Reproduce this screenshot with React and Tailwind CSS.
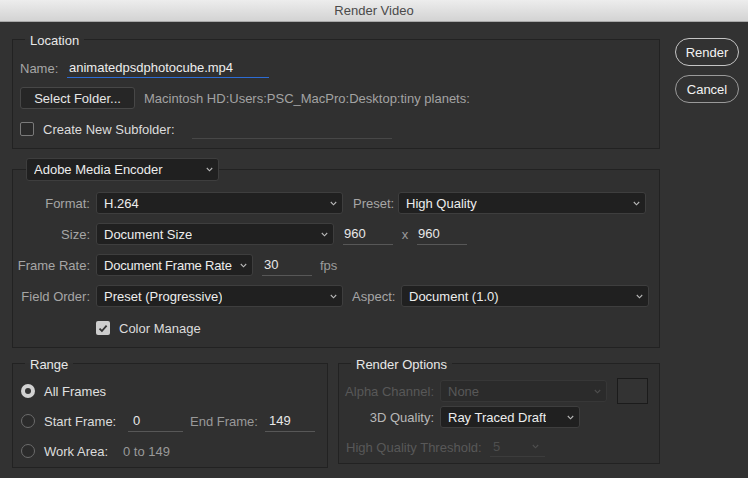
import React from "react";

const Chevron = ({ dim }) => (
  <svg width="7" height="5" viewBox="0 0 7 5" className="shrink-0">
    <path d="M0.8 1 L3.5 3.8 L6.2 1" fill="none" stroke={dim ? "#4e4e4e" : "#b8b8b8"} strokeWidth="1.1" />
  </svg>
);

function Dropdown({ value, className = "", disabled }) {
  return (
    <div
      className={`flex h-[22px] items-center justify-between gap-[4px] rounded-[3px] border pl-[7px] pr-[5px] ${
        disabled ? "border-[#373737] bg-[#2b2b2b] text-[#585858]" : "border-[#3e3e3e] bg-[#202020] text-[#ededed]"
      } ${className}`}
    >
      <span className="truncate pt-[1px]">{value}</span>
      <Chevron dim={disabled} />
    </div>
  );
}

function Field({ value, className = "" }) {
  return (
    <div className={`flex h-[22px] items-center border-b border-[#575757] pt-[1px] text-[#e8e8e8] ${className}`}>
      {value}
    </div>
  );
}

// right-aligned label that may spill to the left instead of wrapping
function Label({ children, className = "" }) {
  return <div className={`flex shrink-0 justify-end whitespace-nowrap pt-[1px] ${className}`}>{children}</div>;
}

function Checkbox({ checked }) {
  if (!checked) {
    return <div className="h-[14px] w-[14px] shrink-0 rounded-[2px] border border-[#7a7a7a] bg-[#2a2a2a]" />;
  }
  return (
    <div className="flex h-[14px] w-[14px] shrink-0 items-center justify-center rounded-[2px] bg-[#cdcdcd]">
      <svg width="10" height="9" viewBox="0 0 10 9">
        <path d="M1.5 4.6 L3.9 7 L8.6 1.6" fill="none" stroke="#333" strokeWidth="1.8" />
      </svg>
    </div>
  );
}

function Radio({ checked }) {
  if (checked) {
    return (
      <div className="flex h-[14px] w-[14px] shrink-0 items-center justify-center rounded-full bg-[#d2d2d2]">
        <div className="h-[6px] w-[6px] rounded-full bg-[#353535]" />
      </div>
    );
  }
  return <div className="h-[14px] w-[14px] shrink-0 rounded-full border border-[#6c6c6c] bg-[#2b2b2b]" />;
}

function Legend({ children }) {
  return <legend className="ml-[5px] px-[5px] pt-[4px] leading-[16px] text-[#e8e8e8]">{children}</legend>;
}

export default function App() {
  return (
    <div className="h-[478px] w-[748px] overflow-hidden bg-[#323232] font-['Liberation_Sans',Arial,sans-serif] text-[13px] leading-[16px]">
      {/* title bar */}
      <div className="flex h-[22px] items-center justify-center border-b border-[#a8a8a8] bg-gradient-to-b from-[#ededed] to-[#d3d3d3] text-[#4a4a4a]">
        Render Video
      </div>

      <div className="flex pl-[12px] pt-[7px]">
        <div className="flex w-[648px] flex-col">
          {/* Location */}
          <fieldset className="min-w-0 border border-[#222] bg-[#303030] px-[7px] pb-[9px]">
            <Legend>Location</Legend>
            <div className="mt-[9px] flex h-[20px] items-center">
              <span className="w-[47px] pt-[1px] text-[#a6a6a6]">Name:</span>
              <div className="flex h-[20px] w-[202px] items-center border-b border-[#2d6cd4] pl-[2px] pt-[1px] text-[#ededed]">
                animatedpsdphotocube.mp4
              </div>
            </div>
            <div className="mt-[9px] flex h-[22px] items-center">
              <button className="flex h-[22px] w-[115px] items-center justify-center rounded-[3px] border border-[#474747] bg-[#262626] pt-[1px] text-[#e6e6e6]">
                Select Folder...
              </button>
              <span className="ml-[9px] whitespace-nowrap pt-[1px] text-[#a3a3a3]">Macintosh HD:Users:PSC_MacPro:Desktop:tiny planets:</span>
            </div>
            <div className="mt-[10px] flex h-[20px] items-center">
              <Checkbox />
              <span className="ml-[9px] w-[149px] whitespace-nowrap pt-[1px] text-[#dcdcdc]">Create New Subfolder:</span>
              <div className="h-[20px] w-[200px] border-b border-[#474747]" />
            </div>
          </fieldset>

          {/* Encoder */}
          <fieldset className="mt-[9px] min-w-0 border border-[#222] bg-[#303030] px-[7px] pb-[9px]">
            <legend className="ml-[6px]">
              <Dropdown value="Adobe Media Encoder" className="h-[23px] w-[193px]" />
            </legend>
            <div className="mt-[11px] flex flex-col gap-[9px]">
              <div className="flex h-[22px] items-center">
                <Label className="w-[70px] text-[#a6a6a6]">Format:</Label>
                <Dropdown value="H.264" className="ml-[6px] w-[247px]" />
                <span className="ml-[10px] w-[45px] pt-[1px] text-[#a6a6a6]">Preset:</span>
                <Dropdown value="High Quality" className="w-[248px]" />
              </div>
              <div className="flex h-[22px] items-center">
                <Label className="w-[70px] text-[#a6a6a6]">Size:</Label>
                <Dropdown value="Document Size" className="ml-[6px] w-[238px]" />
                <Field value="960" className="ml-[9px] w-[50px] pl-[1px]" />
                <span className="w-[24px] pt-[1px] text-center text-[#9c9c9c]">x</span>
                <Field value="960" className="w-[50px] pl-[1px]" />
              </div>
              <div className="flex h-[22px] items-center">
                <Label className="w-[70px] text-[#a6a6a6]">Frame Rate:</Label>
                <Dropdown value="Document Frame Rate" className="ml-[6px] w-[157px] tracking-[-0.2px]" />
                <Field value="30" className="ml-[9px] w-[50px] pl-[2px]" />
                <span className="ml-[8px] pt-[1px] text-[#9c9c9c]">fps</span>
              </div>
              <div className="flex h-[22px] items-center">
                <Label className="w-[70px] text-[#a6a6a6]">Field Order:</Label>
                <Dropdown value="Preset (Progressive)" className="ml-[6px] w-[247px]" />
                <span className="ml-[9px] w-[49px] pt-[1px] text-[#a6a6a6]">Aspect:</span>
                <Dropdown value="Document (1.0)" className="w-[248px]" />
              </div>
            </div>
            <div className="mt-[11px] flex h-[20px] items-center pl-[76px]">
              <Checkbox checked />
              <span className="ml-[9px] pt-[1px] text-[#dcdcdc]">Color Manage</span>
            </div>
          </fieldset>

          <div className="mt-[5px] flex items-start gap-[10px]">
            {/* Range */}
            <fieldset className="w-[316px] min-w-0 border border-[#222] bg-[#303030] px-[7px] pb-[5px]">
              <Legend>Range</Legend>
              <div className="mt-[7px] flex flex-col gap-[8px]">
                <div className="flex h-[22px] items-center pl-[1px]">
                  <Radio checked />
                  <span className="ml-[9px] pt-[1px] text-[#e0e0e0]">All Frames</span>
                </div>
                <div className="flex h-[22px] items-center pl-[1px]">
                  <Radio />
                  <span className="ml-[9px] w-[84px] whitespace-nowrap pt-[1px] text-[#dcdcdc]">Start Frame:</span>
                  <Field value="0" className="w-[55px] pl-[5px]" />
                  <span className="ml-[7px] w-[75px] whitespace-nowrap pt-[1px] text-[#999]">End Frame:</span>
                  <Field value="149" className="w-[50px] pl-[4px]" />
                </div>
                <div className="flex h-[22px] items-center pl-[1px]">
                  <Radio />
                  <span className="ml-[9px] w-[79px] whitespace-nowrap pt-[1px] text-[#dcdcdc]">Work Area:</span>
                  <span className="pt-[1px] text-[#999]">0 to 149</span>
                </div>
              </div>
            </fieldset>

            {/* Render Options */}
            <fieldset className="w-[322px] min-w-0 border border-[#222] bg-[#303030] px-[7px] pb-[5px]">
              <Legend>Render Options</Legend>
              <div className="mt-[5px] flex h-[26px] items-center">
                <Label className="w-[88px] text-[#585858]">Alpha Channel:</Label>
                <Dropdown value="None" disabled className="ml-[6px] w-[167px]" />
                <div className="ml-[10px] h-[26px] w-[31px] border border-[#1b1b1b] bg-[#333]" />
              </div>
              <div className="mt-[2px] flex h-[22px] items-center">
                <Label className="w-[88px] text-[#b8b8b8]">3D Quality:</Label>
                <Dropdown value="Ray Traced Draft" className="ml-[6px] w-[140px]" />
              </div>
              <div className="mt-[8px] flex h-[22px] items-center">
                <span className="w-[144px] whitespace-nowrap pt-[1px] text-[#585858]">High Quality Threshold:</span>
                <div className="flex h-[20px] w-[55px] items-center justify-between border-b border-[#3c3c3c] pl-[3px] pr-[6px] text-[#4e4e4e]">
                  <span className="pt-[1px]">5</span>
                  <Chevron dim />
                </div>
              </div>
            </fieldset>
          </div>
        </div>

        {/* buttons */}
        <div className="ml-[15px] flex flex-col gap-[9px] pt-[9px]">
          <button className="h-[28px] w-[64px] rounded-full border border-[#c4c4c4] pt-[1px] text-[#f2f2f2]">Render</button>
          <button className="h-[28px] w-[64px] rounded-full border border-[#9a9a9a] pt-[1px] text-[#f2f2f2]">Cancel</button>
        </div>
      </div>
    </div>
  );
}
